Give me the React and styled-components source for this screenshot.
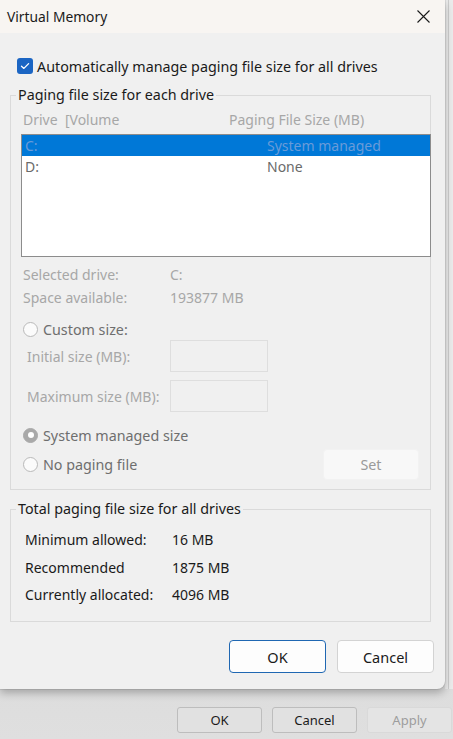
import React from "react";
import styled, { createGlobalStyle } from "styled-components";

const uiFont = `"Noto Sans", "Open Sans", sans-serif`;

const GlobalStyle = createGlobalStyle`
  html, body {
    margin: 0;
    padding: 0;
    background: #d4d4d4;
  }
  body {
    font-family: ${uiFont};
    -webkit-font-smoothing: antialiased;
  }
`;

const Screen = styled.div`
  width: 453px;
  height: 739px;
  overflow: hidden;
  display: grid;
  grid-template-columns: 445px 1fr;
  grid-template-rows: 689px 1fr;
  background: linear-gradient(#c2c2c2, #dfdfdf);
`;

const RightEdge = styled.div`
  grid-area: 1 / 2;
  background: #ebebeb;
  display: flex;
  padding-left: 3px;
  &::before {
    content: "";
    width: 1px;
    background: #cdcdcd;
  }
`;

const BackBar = styled.div`
  grid-area: 2 / 1 / 3 / 3;
  display: flex;
  justify-content: flex-end;
  align-items: flex-start;
  gap: 10px;
  padding: 18px 1px 0 0;
`;

const BackButton = styled.button`
  width: 85px;
  height: 26px;
  border-radius: 3px;
  border: 1px solid ${(p) => (p.disabled ? "#d9d9d9" : "#bdbdbd")};
  background: ${(p) => (p.disabled ? "#e4e4e4" : "#e1e1e1")};
  color: ${(p) => (p.disabled ? "#9d9d9d" : "#1b1b1b")};
  font-family: ${uiFont};
  font-size: 13px;
  padding: 0;
`;

const Dialog = styled.div`
  grid-area: 1 / 1;
  background: #f0f0f0;
  border-radius: 0 0 8px 0;
  box-shadow: 0 4px 9px rgba(0, 0, 0, 0.26), 0 0 0 1px rgba(0, 0, 0, 0.07);
  display: flex;
  flex-direction: column;
  overflow: hidden;
`;

const TitleBar = styled.div`
  height: 32px;
  flex: none;
  background: #f8f5f2;
  display: flex;
  align-items: center;
  justify-content: space-between;
  padding: 0 15px 1px 7px;
  color: #1a1a1a;
  font-size: 13.8px;
`;

const Body = styled.div`
  display: flex;
  flex-direction: column;
  padding: 0 14px 16px 10px;
`;

const CheckRow = styled.label`
  margin-top: 25px;
  padding-left: 7px;
  height: 16px;
  display: flex;
  align-items: center;
  gap: 4px;
  font-size: 14.3px;
  color: #1a1a1a;
`;

const CheckBox = styled.span`
  width: 16px;
  height: 16px;
  border-radius: 3px;
  background: #1b65c3;
  display: flex;
  align-items: center;
  justify-content: center;
`;

const Group = styled.fieldset`
  margin: ${(p) => p.$top}px 0 0;
  padding: 0;
  border: 1px solid #dadada;
  min-width: 0;
`;

const Legend = styled.legend`
  margin-left: 5px;
  padding: 0 2px;
  font-size: 14.3px;
  line-height: 20px;
  color: #1a1a1a;
`;

const GroupInner = styled.div`
  display: flex;
  flex-direction: column;
  padding: ${(p) => p.$pad};
`;

const ColumnHeader = styled.div`
  margin-top: 4px;
  height: 20px;
  display: grid;
  grid-template-columns: 206px 1fr;
  align-items: center;
  padding-left: 2px;
  font-size: 14px;
  color: #a7a7a7;
`;

const DriveList = styled.div`
  margin: 5px -1px 0 0;
  height: 123px;
  box-sizing: border-box;
  border: 1px solid #8c8c8c;
  background: #ffffff;
  display: flex;
  flex-direction: column;
`;

const DriveRow = styled.div`
  height: 21px;
  display: grid;
  grid-template-columns: 242px 1fr;
  align-items: center;
  padding-left: 3px;
  font-size: 14px;
  background: ${(p) => (p.$selected ? "#0078d7" : "transparent")};
  color: ${(p) => (p.$selected ? "#6a9bd8" : "#6a6a6a")};
`;

const InfoRow = styled.div`
  margin-top: ${(p) => p.$top}px;
  height: 20px;
  display: grid;
  grid-template-columns: ${(p) => p.$col}px 1fr;
  align-items: center;
  padding-left: ${(p) => p.$indent}px;
  font-size: 14px;
  color: ${(p) => (p.$muted ? "#a7a7a7" : "#1a1a1a")};
`;

const RadioRow = styled.label`
  margin-top: ${(p) => p.$top}px;
  height: ${(p) => p.$height || 20}px;
  display: flex;
  align-items: center;
  gap: 5px;
  padding: 0 11px 0 2px;
  font-size: 14.3px;
  color: #6e6e6e;
`;

const Radio = styled.span`
  width: 15px;
  height: 15px;
  box-sizing: border-box;
  border-radius: 50%;
  flex: none;
  border: 1px solid ${(p) => (p.$checked ? "#a9a9a9" : "#b9b9b9")};
  background: ${(p) => (p.$checked ? "#a9a9a9" : "#fbfbfb")};
  display: flex;
  align-items: center;
  justify-content: center;
  &::after {
    content: "";
    display: ${(p) => (p.$checked ? "block" : "none")};
    width: 6px;
    height: 6px;
    border-radius: 50%;
    background: #ffffff;
  }
`;

const SizeRow = styled.div`
  margin-top: ${(p) => p.$top}px;
  height: 32px;
  display: grid;
  grid-template-columns: 143px 98px;
  align-items: center;
  padding-left: 6px;
  font-size: 14px;
  color: #a7a7a7;
`;

const SizeInput = styled.div`
  height: 32px;
  box-sizing: border-box;
  border: 1px solid #dedede;
  background: #f0f0f0;
`;

const SetButton = styled.button`
  margin-left: auto;
  width: 96px;
  height: 31px;
  border-radius: 4px;
  border: 1px solid #f2f2f2;
  background: #f8f8f8;
  color: #9a9a9a;
  font-family: ${uiFont};
  font-size: 14.3px;
  padding: 0;
`;

const Footer = styled.div`
  margin-top: 18px;
  display: flex;
  justify-content: flex-end;
  gap: 11px;
  margin-right: -3px;
`;

const DialogButton = styled.button`
  width: 97px;
  height: 33px;
  border-radius: 4px;
  border: 1px solid ${(p) => (p.$primary ? "#1f67b2" : "#d3d3d3")};
  background: #fdfdfd;
  color: #1a1a1a;
  font-family: ${uiFont};
  font-size: 14.5px;
  padding: 0;
`;

const CloseIcon = () => (
  <svg width="13" height="13" viewBox="0 0 13 13">
    <path d="M0.5 0.5 L12.5 12.5 M12.5 0.5 L0.5 12.5" stroke="#1a1a1a" strokeWidth="1.1" fill="none" />
  </svg>
);

const CheckMark = () => (
  <svg width="10" height="8" viewBox="0 0 10 8">
    <path d="M1.5 4.2 L3.9 6.4 L8.6 1.6" stroke="#ffffff" strokeWidth="1.3" fill="none" strokeLinecap="round" strokeLinejoin="round" />
  </svg>
);

const drives = [
  { letter: "C:", size: "System managed", selected: true },
  { letter: "D:", size: "None", selected: false },
];

const totals = [
  ["Minimum allowed:", "16 MB", 10],
  ["Recommended", "1875 MB", 8],
  ["Currently allocated:", "4096 MB", 7],
];

export default function App() {
  return (
    <>
      <GlobalStyle />
      <Screen>
        <RightEdge />
        <BackBar>
          <BackButton>OK</BackButton>
          <BackButton>Cancel</BackButton>
          <BackButton disabled>Apply</BackButton>
        </BackBar>
        <Dialog>
          <TitleBar>
            <span>Virtual Memory</span>
            <CloseIcon />
          </TitleBar>
          <Body>
            <CheckRow>
              <CheckBox>
                <CheckMark />
              </CheckBox>
              Automatically manage paging file size for all drives
            </CheckRow>

            <Group $top={11}>
              <Legend>Paging file size for each drive</Legend>
              <GroupInner $pad="0 0 9px 10px">
                <ColumnHeader>
                  <span>Drive&nbsp; [Volume</span>
                  <span>Paging File Size (MB)</span>
                </ColumnHeader>
                <DriveList>
                  {drives.map((d) => (
                    <DriveRow key={d.letter} $selected={d.selected}>
                      <span>{d.letter}</span>
                      <span>{d.size}</span>
                    </DriveRow>
                  ))}
                </DriveList>
                <InfoRow $top={7} $col={147} $indent={2} $muted>
                  <span>Selected drive:</span>
                  <span>C:</span>
                </InfoRow>
                <InfoRow $top={3} $col={147} $indent={2} $muted>
                  <span>Space available:</span>
                  <span>193877 MB</span>
                </InfoRow>
                <RadioRow $top={12}>
                  <Radio />
                  Custom size:
                </RadioRow>
                <SizeRow $top={1}>
                  <span>Initial size (MB):</span>
                  <SizeInput />
                </SizeRow>
                <SizeRow $top={8}>
                  <span>Maximum size (MB):</span>
                  <SizeInput />
                </SizeRow>
                <RadioRow $top={13}>
                  <Radio $checked />
                  System managed size
                </RadioRow>
                <RadioRow $top={4} $height={31}>
                  <Radio />
                  No paging file
                  <SetButton disabled>Set</SetButton>
                </RadioRow>
              </GroupInner>
            </Group>

            <Group $top={9}>
              <Legend>Total paging file size for all drives</Legend>
              <GroupInner $pad="0 0 17px 14px">
                {totals.map(([label, value, top]) => (
                  <InfoRow key={label} $top={top} $col={147} $indent={0}>
                    <span>{label}</span>
                    <span>{value}</span>
                  </InfoRow>
                ))}
              </GroupInner>
            </Group>

            <Footer>
              <DialogButton $primary>OK</DialogButton>
              <DialogButton>Cancel</DialogButton>
            </Footer>
          </Body>
        </Dialog>
      </Screen>
    </>
  );
}
